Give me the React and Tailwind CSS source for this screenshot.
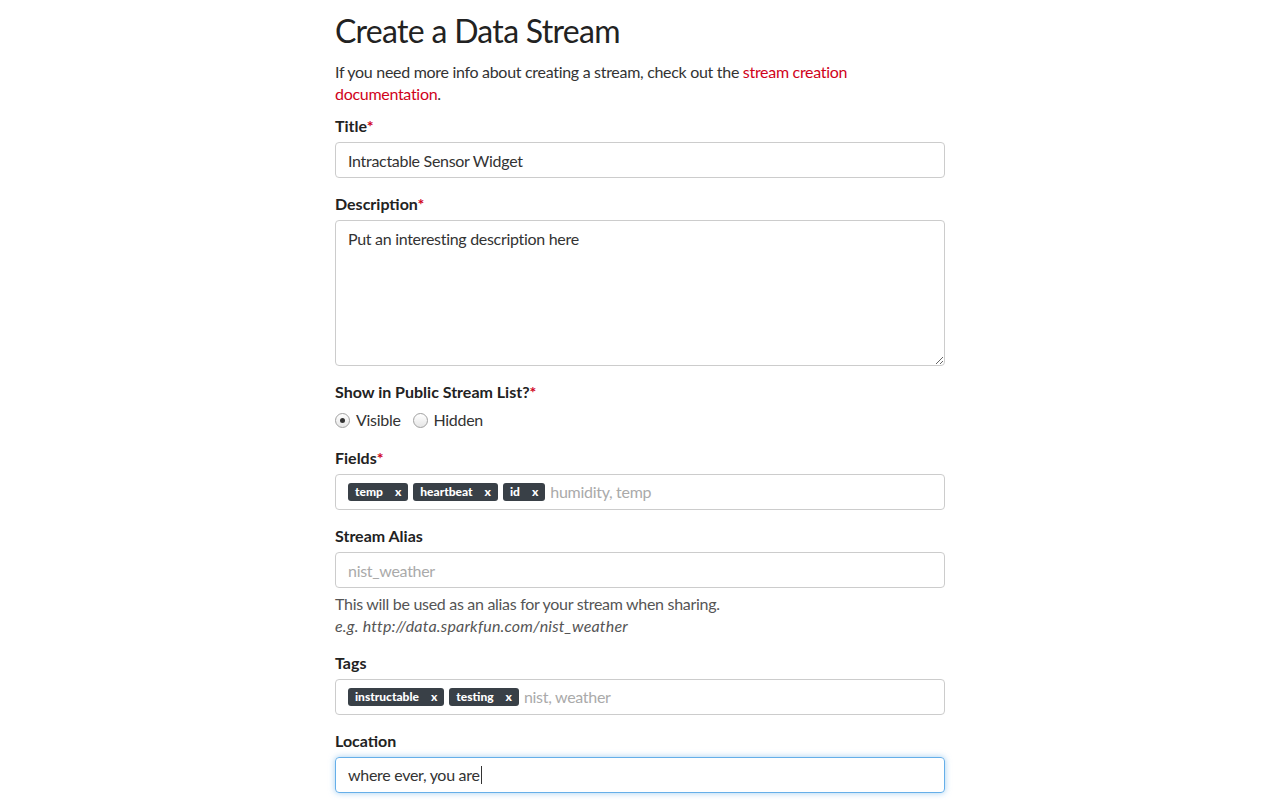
import { useState } from "react";

const font = { fontFamily: "Lato, 'Liberation Sans', sans-serif" };

function Label({ children, required }) {
  return (
    <label className="block text-[16px] leading-[22px] font-bold tracking-normal text-[#222] mb-[5px]">
      {children}
      {required && <span className="text-[#d0021b]">*</span>}
    </label>
  );
}

function Chip({ children }) {
  return (
    <span className="inline-flex items-center h-[18px] px-[7px] rounded-[3px] bg-[#394047] text-white text-[12px] font-black tracking-normal leading-none mr-[5px]">
      {children}
      <span className="ml-[12px]">x</span>
    </span>
  );
}

function TagInput({ chips, placeholder }) {
  return (
    <div className="flex items-center h-[36px] px-[12px] border border-[#ccc] rounded-[4px] bg-white">
      {chips.map((c) => (
        <Chip key={c}>{c}</Chip>
      ))}
      <span className="text-[16px] text-[#aaa]">{placeholder}</span>
    </div>
  );
}

export default function App() {
  const [visible, setVisible] = useState(true);

  return (
    <div className="min-h-screen bg-white" style={font}>
      <div className="w-[610px] ml-[335px] pt-[11px] text-[#333] tracking-[-0.3px]">
        <h1 className="text-[32px] leading-[40px] text-[#222] tracking-[-0.7px] mb-[10px]">Create a Data Stream</h1>
        <p className="text-[16px] leading-[22px] mb-[10px]">
          If you need more info about creating a stream, check out the{" "}
          <a href="#" className="text-[#d0021b]">stream creation documentation</a>.
        </p>

        {/* Title */}
        <div className="mb-[15px]">
          <Label required>Title</Label>
          <input
            className="w-full h-[36px] px-[12px] border border-[#ccc] rounded-[4px] text-[16px] text-[#333] tracking-[-0.3px] outline-none"
            defaultValue="Intractable Sensor Widget"
          />
        </div>

        {/* Description */}
        <div className="mb-[15px]">
          <Label required>Description</Label>
          <textarea
            className="block w-full h-[146px] px-[12px] py-[7px] border border-[#ccc] rounded-[4px] text-[16px] leading-[22px] text-[#333] tracking-[-0.3px] outline-none"
            defaultValue="Put an interesting description here"
          />
        </div>

        {/* Public */}
        <div className="mb-[15px]">
          <Label required>Show in Public Stream List?</Label>
          <div className="flex items-center h-[24px] mt-[1px] text-[16px]">
            <label className="flex items-center mr-[12px] cursor-pointer" onClick={() => setVisible(true)}>
              <span className="w-[15px] h-[15px] rounded-full border border-[#a0a0a0] bg-gradient-to-b from-white to-[#e6e6e6] flex items-center justify-center mr-[6px]">
                {visible && <span className="w-[5px] h-[5px] rounded-full bg-[#333]" />}
              </span>
              Visible
            </label>
            <label className="flex items-center cursor-pointer" onClick={() => setVisible(false)}>
              <span className="w-[15px] h-[15px] rounded-full border border-[#a0a0a0] bg-gradient-to-b from-white to-[#e6e6e6] flex items-center justify-center mr-[6px]">
                {!visible && <span className="w-[5px] h-[5px] rounded-full bg-[#333]" />}
              </span>
              Hidden
            </label>
          </div>
        </div>

        {/* Fields */}
        <div className="mb-[15px]">
          <Label required>Fields</Label>
          <TagInput chips={["temp", "heartbeat", "id"]} placeholder="humidity, temp" />
        </div>

        {/* Alias */}
        <div className="mb-[15px]">
          <Label>Stream Alias</Label>
          <input
            className="w-full h-[36px] px-[12px] border border-[#ccc] rounded-[4px] text-[16px] text-[#333] tracking-[-0.3px] placeholder:text-[#aaa] outline-none"
            placeholder="nist_weather"
          />
          <p className="mt-[5px] text-[16px] leading-[22px] text-[#555]">
            This will be used as an alias for your stream when sharing.
            <br />
            <em className="tracking-[0.2px]">e.g. http://data.sparkfun.com/nist_weather</em>
          </p>
        </div>

        {/* Tags */}
        <div className="mb-[15px]">
          <Label>Tags</Label>
          <TagInput chips={["instructable", "testing"]} placeholder="nist, weather" />
        </div>

        {/* Location */}
        <div className="mb-[15px]">
          <Label>Location</Label>
          <div className="flex items-center h-[36px] px-[12px] border border-[#66afe9] rounded-[4px] shadow-[0_0_6px_rgba(102,175,233,0.6)] text-[16px] text-[#333]">
            where ever, you are
            <span className="w-px h-[18px] bg-[#333] ml-px" />
          </div>
        </div>
      </div>
    </div>
  );
}
